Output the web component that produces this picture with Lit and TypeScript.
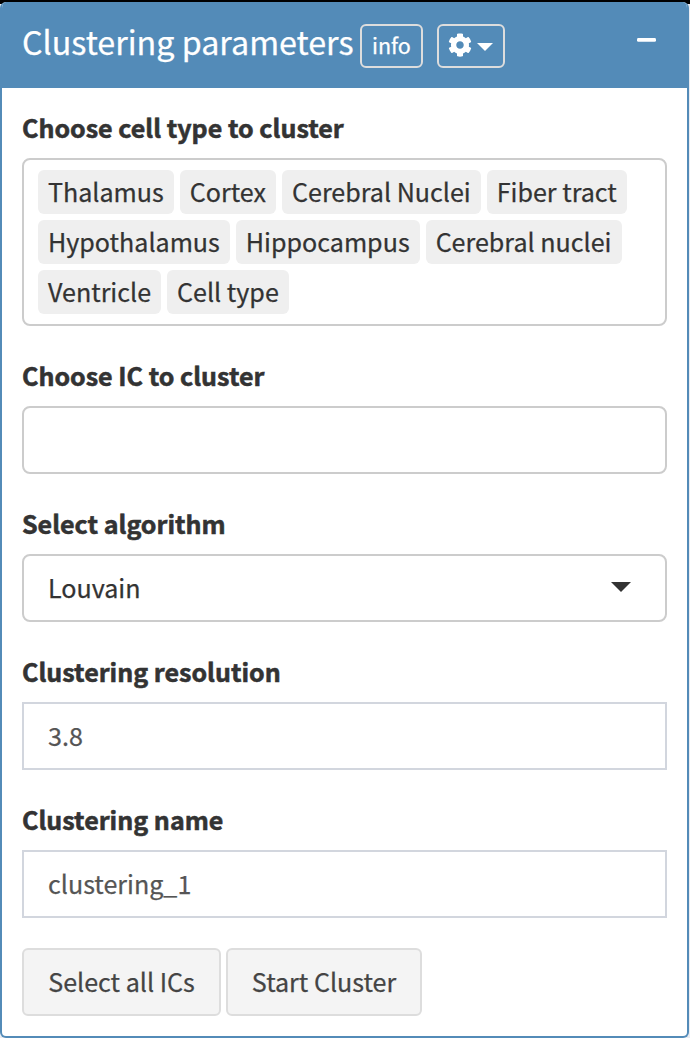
import { LitElement, html, css } from "lit";
import { customElement, state } from "lit/decorators.js";

@customElement("app-root")
export class AppRoot extends LitElement {
  static styles = css`
    :host {
      display: block;
      box-sizing: border-box;
      height: 1038px;
      padding: 2px 1px 0 0;
      background: linear-gradient(#000 0 4px, #e9ecf2 4px);
      font-family: "Source Sans Pro", "Noto Sans CJK SC", sans-serif;
      font-size: 25.08px;
      line-height: 40px;
      color: #333;
      -webkit-text-stroke: 0.25px currentColor;
      overflow: hidden;
    }
    * {
      box-sizing: border-box;
    }
    .card {
      height: 1036px;
      border: 2px solid #538bb8;
      border-top: 0;
      border-radius: 6px;
      background: #fff;
      overflow: hidden;
    }
    .header {
      display: flex;
      align-items: flex-start;
      height: 86px;
      padding: 22px 31px 0 20px;
      background: #538bb8;
      color: #fff;
    }
    .title {
      width: 338px;
      margin: 0;
      font-size: 32.25px;
      font-weight: 400;
      line-height: 34px;
      white-space: nowrap;
    }
    .tool {
      display: flex;
      align-items: center;
      justify-content: center;
      height: 44px;
      padding: 0 0 2px;
      border: 2px solid #ddd;
      border-radius: 6px;
      background: transparent;
      color: #fff;
      font: inherit;
      font-size: 21.5px;
      line-height: 38px;
    }
    .info {
      width: 63px;
      margin-right: 14px;
    }
    .gear {
      width: 68px;
      gap: 5px;
      padding-right: 1px;
    }
    .collapse {
      height: 4px;
      margin: 14px 0 0 auto;
      padding: 0;
      border: 0;
      border-radius: 0;
      line-height: 0;
    }
    .body {
      padding: 20px;
    }
    .field {
      margin-bottom: 30px;
    }
    .label {
      display: block;
      margin-bottom: 12px;
      font-weight: 700;
      font-size: 25.04px;
      line-height: 38px;
      -webkit-text-stroke-width: 0.55px;
      white-space: nowrap;
    }
    .box {
      display: flex;
      align-items: center;
      width: 645px;
      min-height: 68px;
      border: 2px solid #ccc;
      border-radius: 8px;
      background: #fff;
    }
    .tags {
      flex-wrap: wrap;
      gap: 6px;
      padding: 10px 14px;
    }
    .tag {
      height: 44px;
      padding: 0 10px;
      border-radius: 6px;
      background: #efefef;
      line-height: 42px;
      white-space: nowrap;
    }
    .select {
      justify-content: space-between;
      padding: 0 34px 2px 24px;
    }
    .input {
      padding: 0 24px 2px;
      border-color: #d2d6de;
      border-radius: 0;
      color: #555;
    }
    .actions {
      display: flex;
      gap: 5px;
    }
    .btn {
      height: 68px;
      padding: 0 0 2px;
      border: 2px solid #ddd;
      border-radius: 6px;
      background: #f4f4f4;
      color: #444;
      font: inherit;
      white-space: nowrap;
    }
    .all {
      width: 199px;
    }
    .start {
      width: 196px;
    }
    svg {
      display: block;
      fill: currentColor;
    }
  `;

  @state() private cellTypes = [
    "Thalamus",
    "Cortex",
    "Cerebral Nuclei",
    "Fiber tract",
    "Hypothalamus",
    "Hippocampus",
    "Cerebral nuclei",
    "Ventricle",
    "Cell type",
  ];

  render() {
    return html`
      <section class="card">
        <header class="header">
          <h3 class="title">Clustering parameters</h3>
          <button class="tool info">info</button>
          <button class="tool gear" aria-label="Settings">
            <svg width="24" height="24" viewBox="0 0 512 512" stroke="none">
              <path d="M487.4 315.7l-42.6-24.6c4.3-23.2 4.3-47 0-70.2l42.6-24.6c4.9-2.8 7.1-8.6 5.5-14-11.1-35.6-30-67.8-54.7-94.6-3.8-4.1-10-5.1-14.8-2.3L380.8 110c-17.9-15.4-38.5-27.3-60.8-35.1V25.8c0-5.6-3.9-10.5-9.4-11.7-36.7-8.2-74.3-7.8-109.2 0-5.5 1.2-9.4 6.1-9.4 11.7V75c-22.2 7.9-42.8 19.8-60.8 35.1L88.7 85.5c-4.9-2.8-11-1.9-14.8 2.3-24.7 26.7-43.6 58.9-54.7 94.6-1.7 5.4.6 11.2 5.5 14L67.3 221c-4.3 23.2-4.3 47 0 70.2l-42.6 24.6c-4.9 2.8-7.1 8.6-5.5 14 11.1 35.6 30 67.8 54.7 94.6 3.8 4.1 10 5.1 14.8 2.3l42.6-24.6c17.9 15.4 38.5 27.3 60.8 35.1v49.2c0 5.6 3.9 10.5 9.4 11.7 36.7 8.2 74.3 7.8 109.2 0 5.5-1.2 9.4-6.1 9.4-11.7v-49.2c22.2-7.9 42.8-19.8 60.8-35.1l42.6 24.6c4.9 2.8 11 1.9 14.8-2.3 24.7-26.7 43.6-58.9 54.7-94.6 1.5-5.5-.7-11.3-5.6-14.1zM256 336c-44.1 0-80-35.9-80-80s35.9-80 80-80 80 35.9 80 80-35.9 80-80 80z"></path>
            </svg>
            <svg width="16" height="12" viewBox="0 0 16 12"><path d="M0 4h16L8 12z"></path></svg>
          </button>
          <button class="tool collapse" aria-label="Collapse">
            <svg width="19" height="4" viewBox="0 0 19 4"><rect width="19" height="3.8" rx="1.4"></rect></svg>
          </button>
        </header>
        <div class="body">
          <div class="field">
            <span class="label">Choose cell type to cluster</span>
            <div class="box tags">
              ${this.cellTypes.map((name) => html`<span class="tag">${name}</span>`)}
            </div>
          </div>
          <div class="field">
            <span class="label">Choose IC to cluster</span>
            <div class="box"></div>
          </div>
          <div class="field">
            <span class="label">Select algorithm</span>
            <div class="box select">
              <span>Louvain</span>
              <svg width="20" height="10" viewBox="0 0 20 10"><path d="M0 0h20L10 10z"></path></svg>
            </div>
          </div>
          <div class="field">
            <span class="label">Clustering resolution</span>
            <div class="box input">3.8</div>
          </div>
          <div class="field">
            <span class="label">Clustering name</span>
            <div class="box input">clustering_1</div>
          </div>
          <div class="actions">
            <button class="btn all">Select all ICs</button>
            <button class="btn start">Start Cluster</button>
          </div>
        </div>
      </section>
    `;
  }
}
